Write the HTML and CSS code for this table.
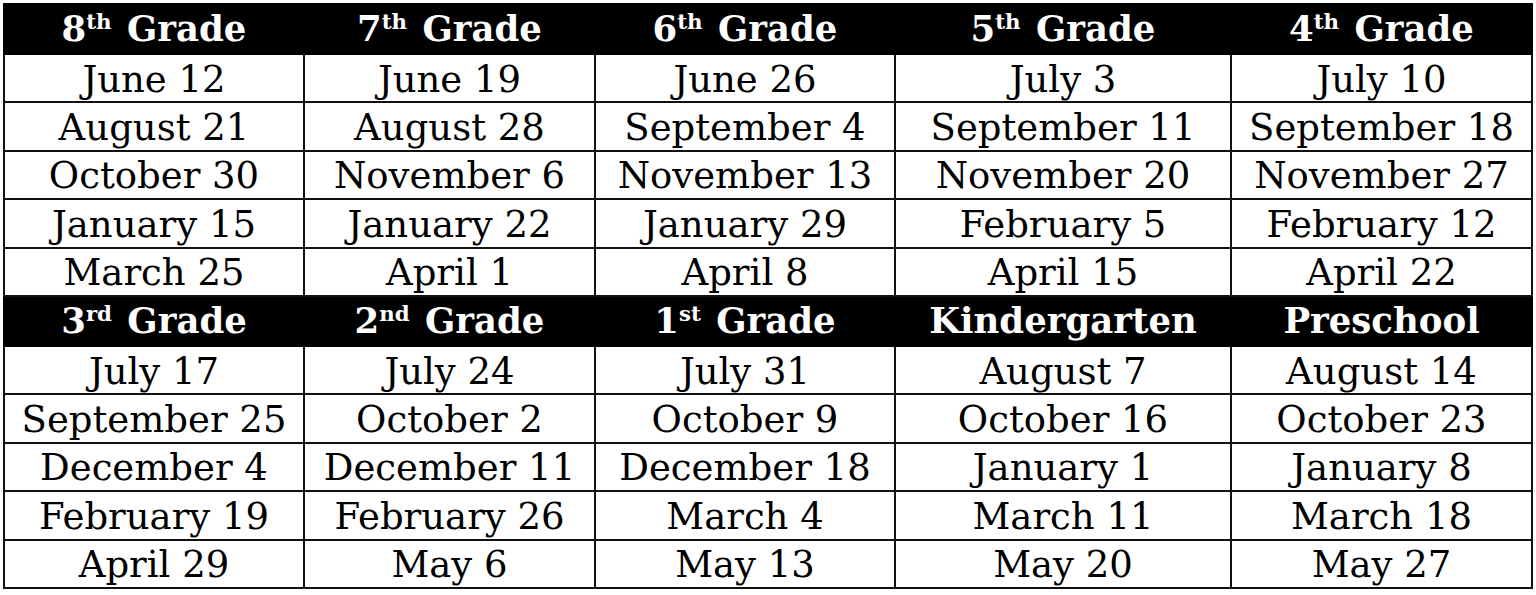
FILE: index.html
```html
<!DOCTYPE html>
<html lang="en">
<head>
<meta charset="utf-8">
<title>Grade Schedule</title>
<link rel="stylesheet" href="styles.css">
</head>
<body>
<table class="schedule">
  <colgroup>
    <col class="c1"><col class="c2"><col class="c3"><col class="c4"><col class="c5">
  </colgroup>
  <tbody>
    <tr class="head">
      <th>8<sup>th</sup> Grade</th><th>7<sup>th</sup> Grade</th><th>6<sup>th</sup> Grade</th><th>5<sup>th</sup> Grade</th><th>4<sup>th</sup> Grade</th>
    </tr>
    <tr><td>June 12</td><td>June 19</td><td>June 26</td><td>July 3</td><td>July 10</td></tr>
    <tr><td>August 21</td><td>August 28</td><td>September 4</td><td>September 11</td><td>September 18</td></tr>
    <tr><td>October 30</td><td>November 6</td><td>November 13</td><td>November 20</td><td>November 27</td></tr>
    <tr><td>January 15</td><td>January 22</td><td>January 29</td><td>February 5</td><td>February 12</td></tr>
    <tr><td>March 25</td><td>April 1</td><td>April 8</td><td>April 15</td><td>April 22</td></tr>
    <tr class="head">
      <th>3<sup>rd</sup> Grade</th><th>2<sup>nd</sup> Grade</th><th>1<sup>st</sup> Grade</th><th>Kindergarten</th><th>Preschool</th>
    </tr>
    <tr><td>July 17</td><td>July 24</td><td>July 31</td><td>August 7</td><td>August 14</td></tr>
    <tr><td>September 25</td><td>October 2</td><td>October 9</td><td>October 16</td><td>October 23</td></tr>
    <tr><td>December 4</td><td>December 11</td><td>December 18</td><td>January 1</td><td>January 8</td></tr>
    <tr><td>February 19</td><td>February 26</td><td>March 4</td><td>March 11</td><td>March 18</td></tr>
    <tr><td>April 29</td><td>May 6</td><td>May 13</td><td>May 20</td><td>May 27</td></tr>
  </tbody>
</table>
</body>
</html>
```

FILE: styles.css
```css
html, body {
  margin: 0;
  padding: 0;
  background: #ffffff;
}
body {
  padding: 3px 0 0 3px;
}
.schedule {
  border-collapse: collapse;
  table-layout: fixed;
  width: 1528px;
  font-family: "DejaVu Serif", "Liberation Serif", serif;
  color: #000;
}
.c1 { width: 300px; }
.c2 { width: 291px; }
.c3 { width: 300px; }
.c4 { width: 336px; }
.c5 { width: 301px; }
.schedule td,
.schedule th {
  border: 2.5px solid #111;
  text-align: center;
  vertical-align: middle;
  padding: 0;
  white-space: nowrap;
  overflow: hidden;
}
.schedule tr {
  height: 48.4px;
}
.schedule td {
  font-size: 37px;
  line-height: 1;
  padding-top: 2px;
}
.schedule tr.head {
  height: 50px;
  background: #000;
}
.schedule th {
  color: #fff;
  font-weight: bold;
  font-size: 35.5px;
  line-height: 1;
  border-color: #000;
}
.schedule sup {
  font-size: 0.6em;
  line-height: 0;
  vertical-align: 0.58em;
  margin-right: 3px;
}
```
